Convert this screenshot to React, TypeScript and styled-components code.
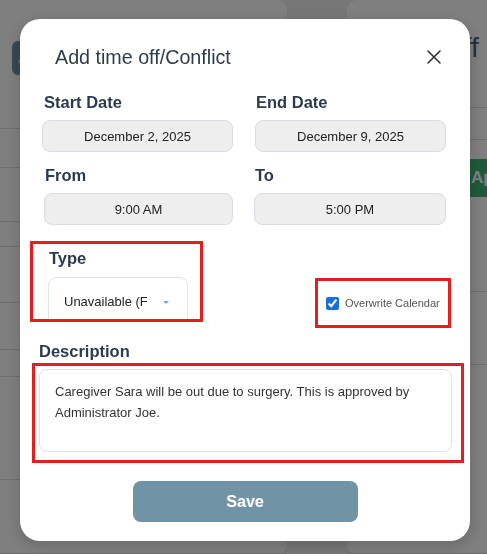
import styled, { createGlobalStyle } from 'styled-components';
import { X } from 'lucide-react';

const GlobalStyle = createGlobalStyle`
    * { box-sizing: border-box; }
    body {
        margin: 0;
        font-family: "Liberation Sans", Arial, sans-serif;
        background: #eeeeee;
        overflow: hidden;
    }
`;

// ---- page behind the modal ----
const Page = styled.div`
    display: flex;
    gap: 60px;
    width: 487px;
    height: 554px;
    overflow: hidden;
`;

const Card = styled.div<{ side: 'left' | 'right' }>`
    flex: ${(p) => (p.side === 'left' ? '0 0 287px' : '1 0 200px')};
    height: 554px;
    background: #ffffff;
    border-radius: ${(p) => (p.side === 'left' ? '0 10px 10px 0' : '10px 0 0 10px')};
    display: flex;
    flex-direction: column;
`;

const BgButton = styled.div<{ color: string; top: number; left: number }>`
    margin-top: ${(p) => p.top}px;
    margin-left: ${(p) => p.left}px;
    width: 120px;
    height: ${(p) => (p.color === 'green' ? 38 : 34)}px;
    border-radius: 6px;
    background: ${(p) => (p.color === 'green' ? '#3eb478' : '#7193a6')};
    color: #ffffff;
    font-size: 17px;
    font-weight: bold;
    display: flex;
    align-items: center;
    padding-left: 6px;
`;

const BgHeading = styled.h2`
    margin: 32px 0 0 26px;
    font-size: 28px;
    font-weight: 400;
    color: #545e6c;
    white-space: nowrap;
`;

const BgRow = styled.div<{ h: number }>`
    height: ${(p) => p.h}px;
    border-bottom: 1px solid #dddddd;
    flex-shrink: 0;
`;

const Overlay = styled.div`
    position: fixed;
    inset: 0;
    background: rgba(0, 0, 0, 0.5);
`;

// ---- modal ----
const Modal = styled.div`
    position: fixed;
    left: 20px;
    top: 19px;
    width: 450px;
    height: 522px;
    background: #ffffff;
    border-radius: 20px;
    box-shadow: 0 4px 16px rgba(0, 0, 0, 0.2);
    padding: 18px 24px 0 22px;
    display: flex;
    flex-direction: column;
`;

const Header = styled.div`
    height: 40px;
    display: flex;
    align-items: center;
    justify-content: space-between;
    padding-left: 13px;
    margin-bottom: 16px;
`;

const Title = styled.h1`
    margin: 0;
    font-size: 19.7px;
    font-weight: 400;
    color: #2f3b4c;
`;

const CloseBtn = styled.button`
    border: none;
    background: none;
    padding: 0;
    display: flex;
    color: #333333;
    cursor: pointer;
`;

const Grid = styled.div`
    display: grid;
    grid-template-columns: 191px 191px;
    column-gap: 22px;
`;

const Field = styled.div<{ gapTop?: number; shift?: number }>`
    display: flex;
    flex-direction: column;
    margin-top: ${(p) => p.gapTop ?? 0}px;
    margin-left: ${(p) => p.shift ?? 0}px;
`;

const Label = styled.label<{ shift?: number }>`
    font-size: 16.5px;
    line-height: 18px;
    font-weight: bold;
    color: #2d3a4e;
    margin-left: ${(p) => p.shift ?? 0}px;
`;

const ReadBox = styled.div`
    margin-top: 9px;
    height: 32px;
    background: #eeeeee;
    border: 1px solid #d9dde3;
    border-radius: 8px;
    display: flex;
    align-items: center;
    justify-content: center;
    font-size: 13px;
    color: #222222;
`;

const OptionsRow = styled.div`
    display: flex;
    justify-content: space-between;
    align-items: flex-start;
    margin: 16px -5px 0 -12px;
`;

const Highlight = styled.div`
    border: 3px solid #e31e1e;
    overflow: hidden;
`;

const TypeBox = styled(Highlight)`
    width: 173px;
    height: 81px;
    padding: 5px 0 0 16px;
`;

const Select = styled.div`
    margin: 9px 0 0 -1px;
    width: 140px;
    height: 48px;
    border: 1px solid #dde3ea;
    border-radius: 8px;
    display: flex;
    align-items: center;
    padding: 0 18px 0 15px;
    font-size: 13px;
    color: #222222;
    gap: 16px;
    white-space: nowrap;
`;

const SelectText = styled.span`
    flex: 1;
    overflow: hidden;
`;

const Caret = styled.span`
    width: 0;
    height: 0;
    border-left: 3px solid transparent;
    border-right: 3px solid transparent;
    border-top: 3px solid #7fa6d0;
    margin-top: 2px;
`;

const CheckBox = styled(Highlight)`
    margin-top: 37px;
    width: 136px;
    height: 50px;
    display: flex;
    align-items: center;
    padding-left: 8px;
    gap: 6px;
    font-size: 11px;
    color: #555555;
    white-space: nowrap;

    input {
        margin: 0;
        width: 13px;
        height: 13px;
        accent-color: #1a6fd8;
    }
`;

const DescLabel = styled(Label)`
    margin-top: 14px;
    margin-left: -3px;
`;

const DescBox = styled(Highlight)`
    margin: 3px -18px 0 -10px;
    height: 100px;
    padding: 3px 9px 0 4px;
`;

const TextArea = styled.div`
    height: 83px;
    border: 1px solid #dde2e8;
    border-radius: 8px;
    padding: 11px 15px;
    font-size: 13px;
    line-height: 21px;
    color: #333333;
`;

const SaveButton = styled.button`
    align-self: center;
    margin: 18px 0 0 2px;
    width: 225px;
    height: 41px;
    border: none;
    border-radius: 8px;
    background: #7193a6;
    color: #ffffff;
    font-family: inherit;
    font-size: 16px;
    font-weight: bold;
`;

const leftRows = [39, 54, 25, 56, 47, 27, 103, 74];
const rightRowsBelow = [32, 95, 73, 189];

export default function App() {
    return (
        <>
            <GlobalStyle />
            <Page>
                <Card side="left">
                    <BgButton color="blue" top={41} left={12}>Add</BgButton>
                    <BgRow h={54} />
                    {leftRows.map((h, i) => (
                        <BgRow key={i} h={h} />
                    ))}
                </Card>
                <Card side="right">
                    <BgHeading>Time Off</BgHeading>
                    <BgRow h={44} />
                    <BgRow h={32} />
                    <BgButton color="green" top={19} left={118}>Approve</BgButton>
                    {rightRowsBelow.slice(1).map((h, i) => (
                        <BgRow key={i} h={h} />
                    ))}
                </Card>
            </Page>
            <Overlay />
            <Modal>
                <Header>
                    <Title>Add time off/Conflict</Title>
                    <CloseBtn aria-label="Close">
                        <X size={24} strokeWidth={1.6} />
                    </CloseBtn>
                </Header>
                <Grid>
                    <Field>
                        <Label shift={2}>Start Date</Label>
                        <ReadBox>December 2, 2025</ReadBox>
                    </Field>
                    <Field>
                        <Label shift={1}>End Date</Label>
                        <ReadBox>December 9, 2025</ReadBox>
                    </Field>
                    <Field gapTop={14} shift={2}>
                        <Label shift={1}>From</Label>
                        <ReadBox>9:00 AM</ReadBox>
                    </Field>
                    <Field gapTop={14} shift={-1}>
                        <Label shift={1}>To</Label>
                        <ReadBox>5:00 PM</ReadBox>
                    </Field>
                </Grid>
                <OptionsRow>
                    <TypeBox>
                        <Label>Type</Label>
                        <Select>
                            <SelectText>Unavailable (Full Day)</SelectText>
                            <Caret />
                        </Select>
                    </TypeBox>
                    <CheckBox>
                        <input type="checkbox" checked readOnly />
                        <span>Overwrite Calendar</span>
                    </CheckBox>
                </OptionsRow>
                <DescLabel>Description</DescLabel>
                <DescBox>
                    <TextArea>
                        Caregiver Sara will be out due to surgery. This is approved by Administrator Joe.
                    </TextArea>
                </DescBox>
                <SaveButton>Save</SaveButton>
            </Modal>
        </>
    );
}
